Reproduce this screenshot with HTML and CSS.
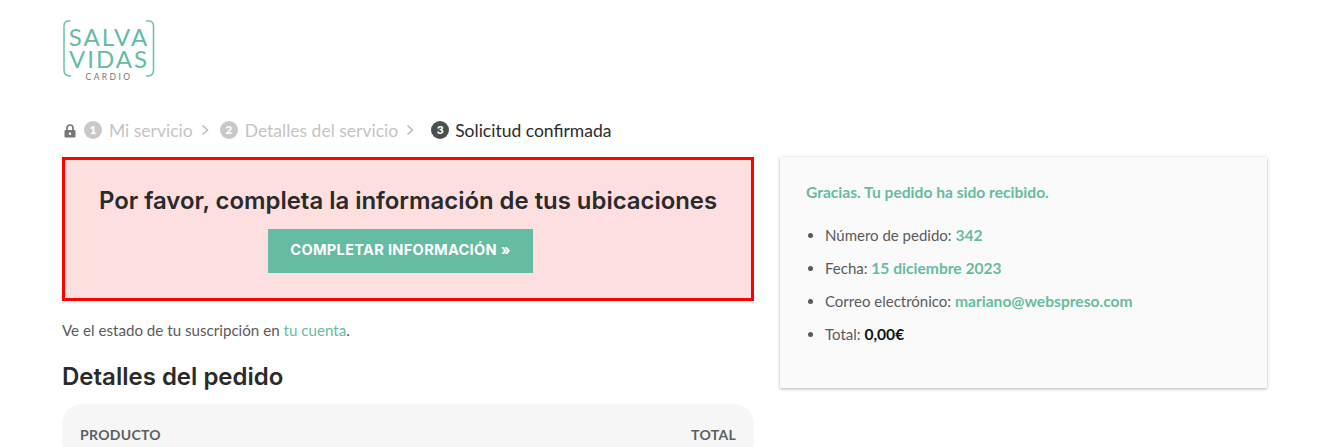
FILE: index.html
```html
<!DOCTYPE html>
<html lang="es">
<head>
<meta charset="utf-8">
<title>Solicitud confirmada</title>
<link rel="stylesheet" href="styles.css">
</head>
<body>
<div class="page">
  <header class="logo">
    <svg class="logo-brackets" width="94" height="59" viewBox="0 0 94 59" fill="none" aria-hidden="true">
      <path d="M8.500 2H7Q2 2 2 7V51Q2 57 8 57H9" />
      <path d="M84 2H86Q91.500 2 91.500 7V51Q91.500 57 86 57H84" />
    </svg>
    <div class="logo-text">
      <span class="logo-line">SALVA</span>
      <span class="logo-line">VIDAS</span>
      <span class="logo-sub">CARDIO</span>
    </div>
  </header>

  <nav class="steps">
    <svg class="lock" width="12" height="14" viewBox="0 0 12 14" aria-hidden="true">
      <path d="M3 6V4a3 3 0 0 1 6 0v2" fill="none" stroke="#777" stroke-width="1.700"/>
      <path fill-rule="evenodd" d="M1.500 6h9a1 1 0 0 1 1 1v5.500a1 1 0 0 1-1 1h-9a1 1 0 0 1-1-1V7a1 1 0 0 1 1-1zM6 8.500a1.200 1.200 0 1 0 0 2.400 1.200 1.200 0 0 0 0-2.400z" fill="#777"/>
    </svg>
    <span class="step"><b class="num">1</b>Mi servicio</span>
    <svg class="chev" width="8" height="12" viewBox="0 0 8 12" aria-hidden="true"><path d="M1.500 1.500 6.500 6l-5 4.500"/></svg>
    <span class="step"><b class="num">2</b>Detalles del servicio</span>
    <svg class="chev" width="8" height="12" viewBox="0 0 8 12" aria-hidden="true"><path d="M1.500 1.500 6.500 6l-5 4.500"/></svg>
    <span class="step current"><b class="num">3</b>Solicitud confirmada</span>
  </nav>

  <div class="columns">
    <main class="main">
      <section class="notice">
        <h2 class="notice-title">Por favor, completa la información de tus ubicaciones</h2>
        <a class="btn" href="#">COMPLETAR INFORMACIÓN »</a>
      </section>
      <p class="status">Ve el estado de tu suscripción en <a href="#">tu cuenta</a>.</p>
      <h2 class="details-title">Detalles del pedido</h2>
      <div class="table-card">
        <span>PRODUCTO</span>
        <span>TOTAL</span>
      </div>
    </main>
    <aside class="summary">
      <p class="thanks">Gracias. Tu pedido ha sido recibido.</p>
      <ul class="facts">
        <li>Número de pedido: <strong>342</strong></li>
        <li>Fecha: <strong>15 diciembre 2023</strong></li>
        <li>Correo electrónico: <strong>mariano@webspreso.com</strong></li>
        <li>Total: <strong class="dark">0,00€</strong></li>
      </ul>
    </aside>
  </div>
</div>
</body>
</html>
```
FILE: styles.css
```css
* { box-sizing: border-box; }
html, body { margin: 0; height: 447px; overflow: hidden; background: #fff; }
body { font-family: "Lato", "Noto Sans", sans-serif; color: #5a5a5a; font-size: 15px; }
.page { padding: 19px 57px 0 62px; }

.logo { position: relative; width: 94px; height: 59px; }
.logo-brackets { display: block; }
.logo-brackets path { stroke: #74c2ab; stroke-width: 1.600; }
.logo-text { position: absolute; inset: 0; display: flex; flex-direction: column; align-items: center; color: #66bca3; font-family: "Lato", sans-serif; }
.logo-line { font-size: 24px; line-height: 22px; letter-spacing: 2px; }
.logo-line:first-child { margin-top: 7px; }
.logo-sub { font-size: 8.500px; line-height: 10px; letter-spacing: 2.400px; color: #777; margin-top: 2px; }

.steps { display: flex; align-items: center; height: 24px; margin-top: 40px; font-size: 17.500px; color: #c4c4c4; }
.lock { margin: 2px 8px 0 2px; }
.step { display: flex; align-items: center; }
.num { width: 18px; height: 18px; border-radius: 50%; background: #c8c8c8; color: #fff; font-size: 12px; line-height: 18px; text-align: center; margin-right: 7px; font-weight: 900; }
.chev { margin: 0 11px 0 8px; }
.chev path { fill: none; stroke: #bbb; stroke-width: 1.500; }
.current { color: #2b2b2b; margin-left: 6px; }
.current .num { background: #4a4f52; margin-right: 6px; }

.columns { display: flex; gap: 26px; align-items: flex-start; margin-top: 15px; }
.main { width: 692px; flex: none; }
.notice { height: 144px; border: 3px solid #f00; background: #fddfe0; padding-top: 27px; text-align: center; }
.notice-title { margin: 0; font-family: "Inter", sans-serif; font-size: 23.900px; font-weight: 600; line-height: 28px; color: #2a2a2a; }
.btn { display: inline-block; margin: 14px 15px 0 0; width: 265px; height: 44px; background: #66bca3; color: #fff; font-family: "Inter", sans-serif; font-size: 14.600px; font-weight: 700; line-height: 42px; text-decoration: none; letter-spacing: .3px; }
.status { margin: 19px 0 0; line-height: 20px; font-size: 15.150px; }
.status a { color: #66bca3; text-decoration: none; }
.details-title { margin: 22px 0 0; font-family: "Inter", sans-serif; font-size: 24px; font-weight: 600; line-height: 30px; color: #2a2a2a; }
.table-card { display: flex; justify-content: space-between; height: 80px; margin-top: 12px; padding: 22px 18px 0; background: #f6f6f6; border-radius: 20px; font-size: 14px; font-weight: 700; letter-spacing: .3px; color: #5a5f63; }

.summary { width: 487px; height: 231px; background: #fafafa; box-shadow: 0 1px 3px rgba(0,0,0,.3); padding: 25px 25px 25px 26px; }
.thanks { margin: 0; color: #66bca3; font-weight: 700; font-size: 15.600px; line-height: 20px; }
.facts { margin: 23px 0 0; padding: 0 0 0 19px; list-style: disc; font-size: 15px; }
.facts li { line-height: 20px; margin-bottom: 13px; }
.facts strong { color: #66bca3; font-weight: 700; font-size: 15.600px; }
.facts strong.dark { color: #111; }
```
